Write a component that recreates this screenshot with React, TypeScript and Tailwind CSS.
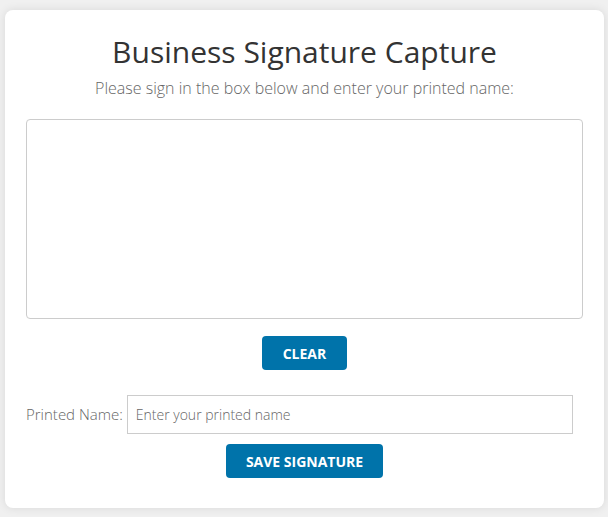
export default function App() {
  return (
    <div className="min-h-[517px] bg-[#f0f0f0] pt-[10px] font-['Open_Sans',sans-serif]">
      <div className="ml-[5px] flex w-[599px] flex-col items-center rounded-[8px] bg-white px-[21px] pb-[30px] pt-[22px] shadow-[0_0_10px_rgba(0,0,0,0.1)]">
        <h1 className="text-[30px] leading-[40px] font-normal text-[#333]">Business Signature Capture</h1>
        <p className="mt-[5px] text-[16px] leading-[22px] font-light text-[#666]">Please sign in the box below and enter your printed name:</p>
        <div className="mt-[20px] h-[200px] w-full rounded-[4px] border border-[#ccc]"></div>
        <button className="mt-[17px] h-[34px] w-[85px] rounded-[4px] bg-[#0073aa] text-[14px] font-bold text-white">CLEAR</button>
        <div className="mt-[25px] flex w-full items-center">
          <label className="text-[15px] font-light text-[#666]">Printed Name:</label>
          <input
            className="ml-[4px] h-[39px] w-[446px] border border-[#ccc] px-[8px] text-[14px] font-light text-[#333] placeholder:text-[#666] outline-none"
            placeholder="Enter your printed name"
          />
        </div>
        <button className="mt-[10px] h-[34px] w-[157px] rounded-[4px] bg-[#0073aa] text-[14px] font-bold text-white">SAVE SIGNATURE</button>
      </div>
    </div>
  );
}
